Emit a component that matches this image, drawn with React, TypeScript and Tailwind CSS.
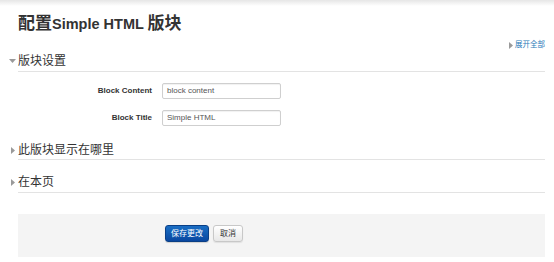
import React from "react";

const FONT = "font-['Liberation_Sans','Noto_Sans_CJK_SC',Arial,sans-serif]";

function TriRight({ color = "#9a9a9a" }: { color?: string }) {
  return (
    <svg width="4" height="7" viewBox="0 0 4 7" className="block">
      <path d="M0 0 L4 3.5 L0 7 Z" fill={color} />
    </svg>
  );
}

function TriDown() {
  return (
    <svg width="7" height="4" viewBox="0 0 7 4" className="block">
      <path d="M0 0 L7 0 L3.5 4 Z" fill="#9a9a9a" />
    </svg>
  );
}

function Header({
  title,
  open,
  mt,
  pb,
}: {
  title: string;
  open?: boolean;
  mt: string;
  pb: string;
}) {
  return (
    <div className={`flex -ml-[9px] ${mt}`}>
      <div className="w-[9px] h-[16px] flex items-center">
        {open ? <TriDown /> : <div className="pl-[2px]"><TriRight /></div>}
      </div>
      <div className={`flex-1 border-b border-[#e3e3e3] ${pb}`}>
        <div className="text-[12px] leading-[16px] text-[#333]">{title}</div>
      </div>
    </div>
  );
}

function Field({ label, value, mt }: { label: string; value: string; mt: string }) {
  return (
    <div className={`flex items-center ${mt}`}>
      <div className="w-[134px] text-right text-[8px] font-bold text-[#333] leading-[16px]">
        {label}
      </div>
      <div className="ml-[10px] w-[119px] h-[16px] border border-[#cfcfcf] rounded-[2px] bg-white shadow-[inset_0_1px_1px_rgba(0,0,0,0.06)] flex items-center pl-[4px] text-[8px] text-[#555]">
        {value}
      </div>
    </div>
  );
}

export default function App() {
  return (
    <div className={`w-[554px] h-[262px] bg-white overflow-hidden ${FONT}`}>
      <div className="h-[6px] bg-gradient-to-b from-[#e6e6e6] to-white" />
      <div className="pl-[18px] pr-[9px]">
        <h2 className="mt-[8px] text-[17px] leading-[20px] font-bold text-[#333]">
          配置<span className="text-[14.5px]">Simple HTML </span>版块
        </h2>
        <div className="mt-[5px] flex justify-end items-center h-[12px]">
          <TriRight />
          <span className="ml-[2px] text-[7.5px] leading-[12px] text-[#2a7ab8]">展开全部</span>
        </div>
        <Header title="版块设置" open mt="mt-[2px]" pb="pb-[2px]" />
        <Field label="Block Content" value="block content" mt="mt-[11px]" />
        <Field label="Block Title" value="Simple HTML" mt="mt-[11px]" />
        <Header title="此版块显示在哪里" mt="mt-[16px]" pb="pb-[1px]" />
        <Header title="在本页" mt="mt-[14px]" pb="pb-[2px]" />
        <div className="mt-[21px] h-[43px] bg-[#f4f4f4] pt-[11px] pl-[147px] flex items-start gap-[4px]">
          <button className="h-[17px] w-[44px] rounded-[3px] border border-[#0a3f86] bg-gradient-to-b from-[#1a6ec4] to-[#0a47a0] text-white text-[8px] leading-[15px] shadow-[0_1px_1px_rgba(0,0,0,0.15)]">
            保存更改
          </button>
          <button className="h-[17px] w-[30px] rounded-[3px] border border-[#c8c8c8] bg-gradient-to-b from-white to-[#e8e8e8] text-[#333] text-[8px] leading-[15px] shadow-[0_1px_1px_rgba(0,0,0,0.08)]">
            取消
          </button>
        </div>
      </div>
    </div>
  );
}
